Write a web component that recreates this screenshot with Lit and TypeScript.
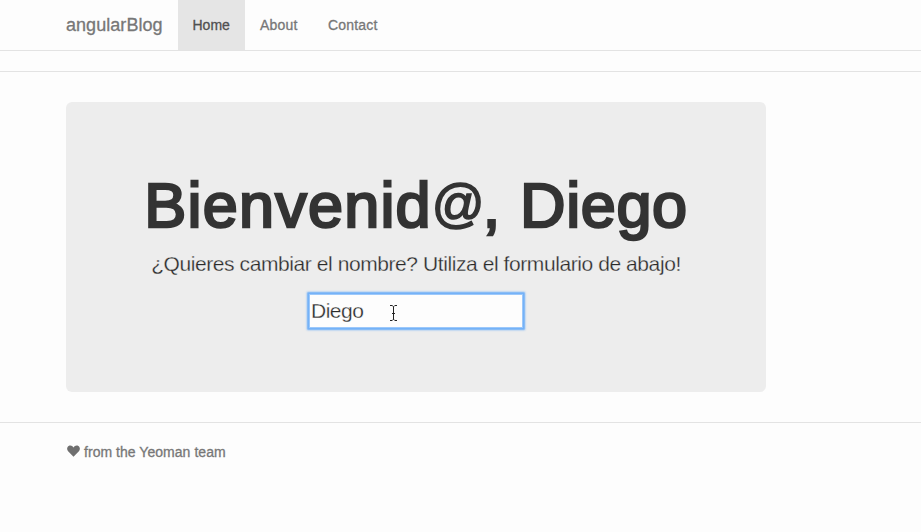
import { LitElement, html, css } from "lit";
import { customElement, state } from "lit/decorators.js";

@customElement("app-root")
export class AppRoot extends LitElement {
  @state() private name = "Diego";
  @state() private active = "Home";

  static styles = css`
    * { box-sizing: border-box; }
    :host {
      display: block;
      height: 532px;
      overflow: hidden;
      background: #fdfdfd;
      color: #333;
      font: 14px/20px "Liberation Sans", Arial, sans-serif;
    }
    .navbar {
      display: flex;
      height: 51px;
      padding-left: 51px;
      border-bottom: 1px solid #e3e3e3;
    }
    .navbar a {
      padding: 15px;
      color: #777;
      text-decoration: none;
      cursor: pointer;
      white-space: nowrap;
      letter-spacing: 0.2px;
      -webkit-text-stroke: 0.3px currentColor;
    }
    .navbar .brand { width: 127px; font-size: 18px; letter-spacing: 0.05px; }
    .navbar .home { width: 67px; letter-spacing: 0; padding-left: 14.5px; }
    .navbar .about { width: 68px; }
    .navbar .active { background: #e5e5e5; color: #505050; }
    .strip { height: 21px; border-bottom: 1px solid #e3e3e3; }
    .jumbotron {
      display: flex;
      flex-direction: column;
      align-items: center;
      width: 700px;
      height: 290px;
      margin: 30px 0 30px 66px;
      padding-top: 69px;
      border-radius: 6px;
      background: #ededed;
    }
    h1 {
      margin: 0;
      font-size: 63px;
      line-height: 69px;
      font-weight: 400;
      letter-spacing: 1.2px;
      white-space: nowrap;
      -webkit-text-stroke: 2.5px #333;
    }
    .at {
      font-size: 52px;
      line-height: 0;
      vertical-align: 6px;
      letter-spacing: -2px;
      -webkit-text-stroke-width: 1.6px;
    }
    .name { letter-spacing: 0.6px; }
    .lead {
      margin: 9px 0 15px;
      font-size: 21px;
      line-height: 30px;
      letter-spacing: -0.42px;
      white-space: nowrap;
      color: #2a2a2a;
      -webkit-text-stroke: 0.28px #ededed;
    }
    .field { position: relative; }
    input {
      display: block;
      width: 214px;
      height: 34px;
      padding: 1px;
      border: 1px solid #9cc8fa;
      outline: none;
      background: #fdfdfd;
      box-shadow: 0 0 0 1.5px #74b2f8, 0 0 2px 2px #7ab4f6;
      color: #2a2a2a;
      font: 21px/30px "Liberation Sans", Arial, sans-serif;
      letter-spacing: -0.5px;
      -webkit-text-stroke: 0.28px #fdfdfd;
    }
    .pointer { position: absolute; left: 80px; top: 11px; }
    .footer {
      display: flex;
      align-items: flex-start;
      gap: 4px;
      padding: 19px 0 0 67px;
      border-top: 1px solid #e3e3e3;
      color: #777;
    }
    .footer p { margin: 0; letter-spacing: 0.04px; -webkit-text-stroke: 0.3px currentColor; }
    .heart { margin-top: 3px; }
  `;

  render() {
    return html`
      <nav class="navbar">
        <a class="brand">angularBlog</a>
        ${["Home", "About", "Contact"].map(
          (item) => html`<a
            class="${item.toLowerCase()} ${item === this.active ? "active" : ""}"
            @click=${() => (this.active = item)}
            >${item}</a
          >`
        )}
      </nav>
      <div class="strip"></div>
      <main class="jumbotron">
        <h1>Bienvenid<span class="at">@</span>, <span class="name">${this.name}</span></h1>
        <p class="lead">¿Quieres cambiar el nombre? Utiliza el formulario de abajo!</p>
        <div class="field">
          <input
            .value=${this.name}
            @input=${(e: Event) => (this.name = (e.target as HTMLInputElement).value)}
          />
          <svg class="pointer" width="9" height="16" viewBox="0 0 9 16" fill="none" stroke="#222">
            <path d="M1 .5H3.2L4.5 1.8 5.8.5H8M4.5 1.5V14.5M1 15.5H3.2L4.5 14.2 5.8 15.5H8M3 8.5H6" />
          </svg>
        </div>
      </main>
      <footer class="footer">
        <svg class="heart" width="13" height="12" viewBox="0 0 13 12" fill="#6f6f6f">
          <path d="M6.5 11.7L1.1 6.3C-.4 4.7-.1 2 1.6.9 3.3-.1 5.5.5 6.5 2.4 7.5.5 9.7-.1 11.4.9 13.1 2 13.4 4.7 11.9 6.3Z" />
        </svg>
        <p>from the Yeoman team</p>
      </footer>
    `;
  }
}
